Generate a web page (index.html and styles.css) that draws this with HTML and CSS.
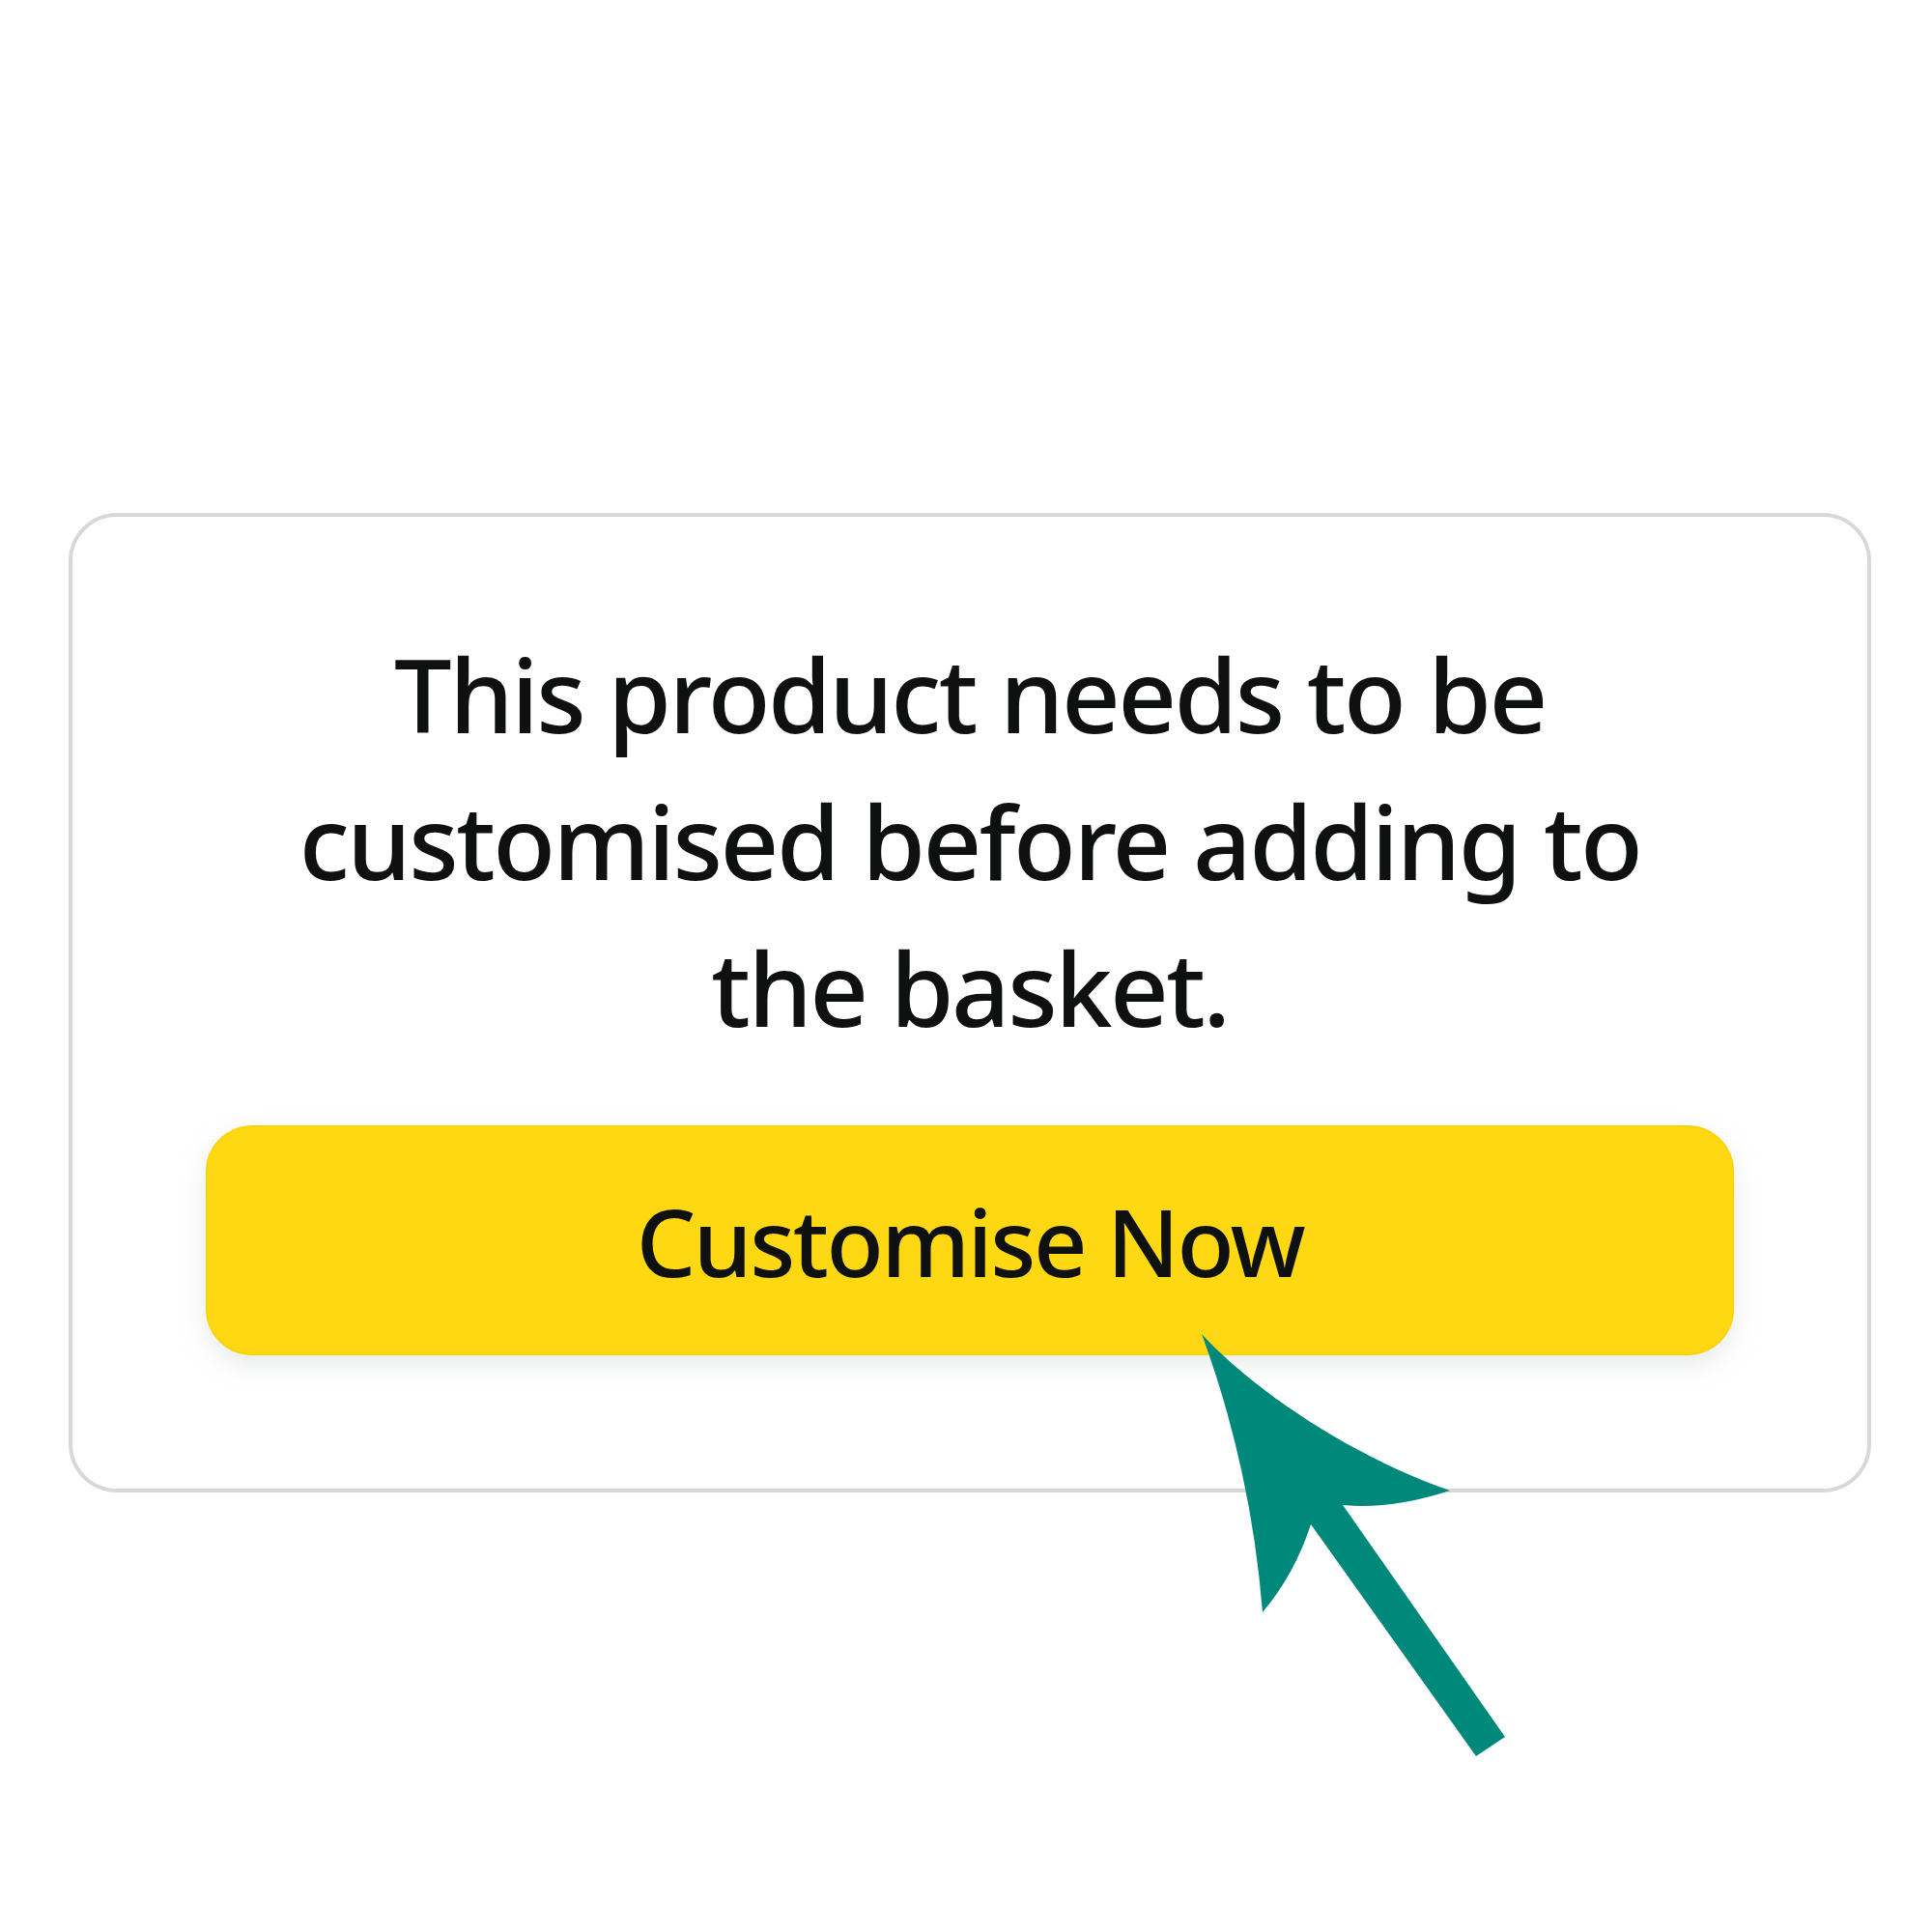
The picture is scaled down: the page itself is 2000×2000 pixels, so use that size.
FILE: index.html
```html
<!DOCTYPE html>
<html lang="en">
<head>
<meta charset="utf-8">
<title>Customise</title>
<link rel="stylesheet" href="styles.css">
</head>
<body>
<main class="page">
  <section class="card">
    <p class="message">This product needs to be customised before adding to the basket.</p>
    <button class="cta" type="button">Customise Now</button>
  </section>
  <svg class="arrow" viewBox="0 0 500 500" width="500" height="500" aria-hidden="true">
    <path d="M94,31 Q145,170 157,319 Q190,280 207,228 L378,468 L408,448 L240,208 Q290,213 351,193 C255,160 150,92 94,31 Z" fill="#00897b"/>
  </svg>
</main>
</body>
</html>
```
FILE: styles.css
```css
html, body {
  margin: 0;
  padding: 0;
  background: #ffffff;
}
.page {
  position: relative;
  width: 2000px;
  height: 2000px;
  padding: 531px 0 0 71px;
  box-sizing: border-box;
  font-family: "Noto Sans", "DejaVu Sans", sans-serif;
  color: #0f1111;
}
.card {
  width: 1866px;
  box-sizing: border-box;
  border: 4px solid #d5d9d9;
  border-radius: 50px;
  background: #fff;
  padding: 107px 138px 138px;
  display: flex;
  flex-direction: column;
  align-items: center;
}
.message {
  margin: 0;
  width: 1500px;
  text-align: center;
  font-size: 106px;
  line-height: 152px;
  letter-spacing: -2.5px;
  font-weight: 500;
}
.cta {
  margin-top: 67px;
  width: 100%;
  height: 238px;
  border: 2px solid #fcd200;
  border-radius: 48px;
  background: #ffd814;
  box-shadow: 0 10px 24px rgba(213, 217, 217, 0.55);
  font-family: "Noto Sans", "DejaVu Sans", sans-serif;
  font-size: 97px;
  font-weight: 500;
  letter-spacing: -2.5px;
  color: #0f1111;
  display: flex;
  align-items: center;
  justify-content: center;
  padding: 0;
}
.arrow {
  position: absolute;
  left: 1150px;
  top: 1350px;
}
```
